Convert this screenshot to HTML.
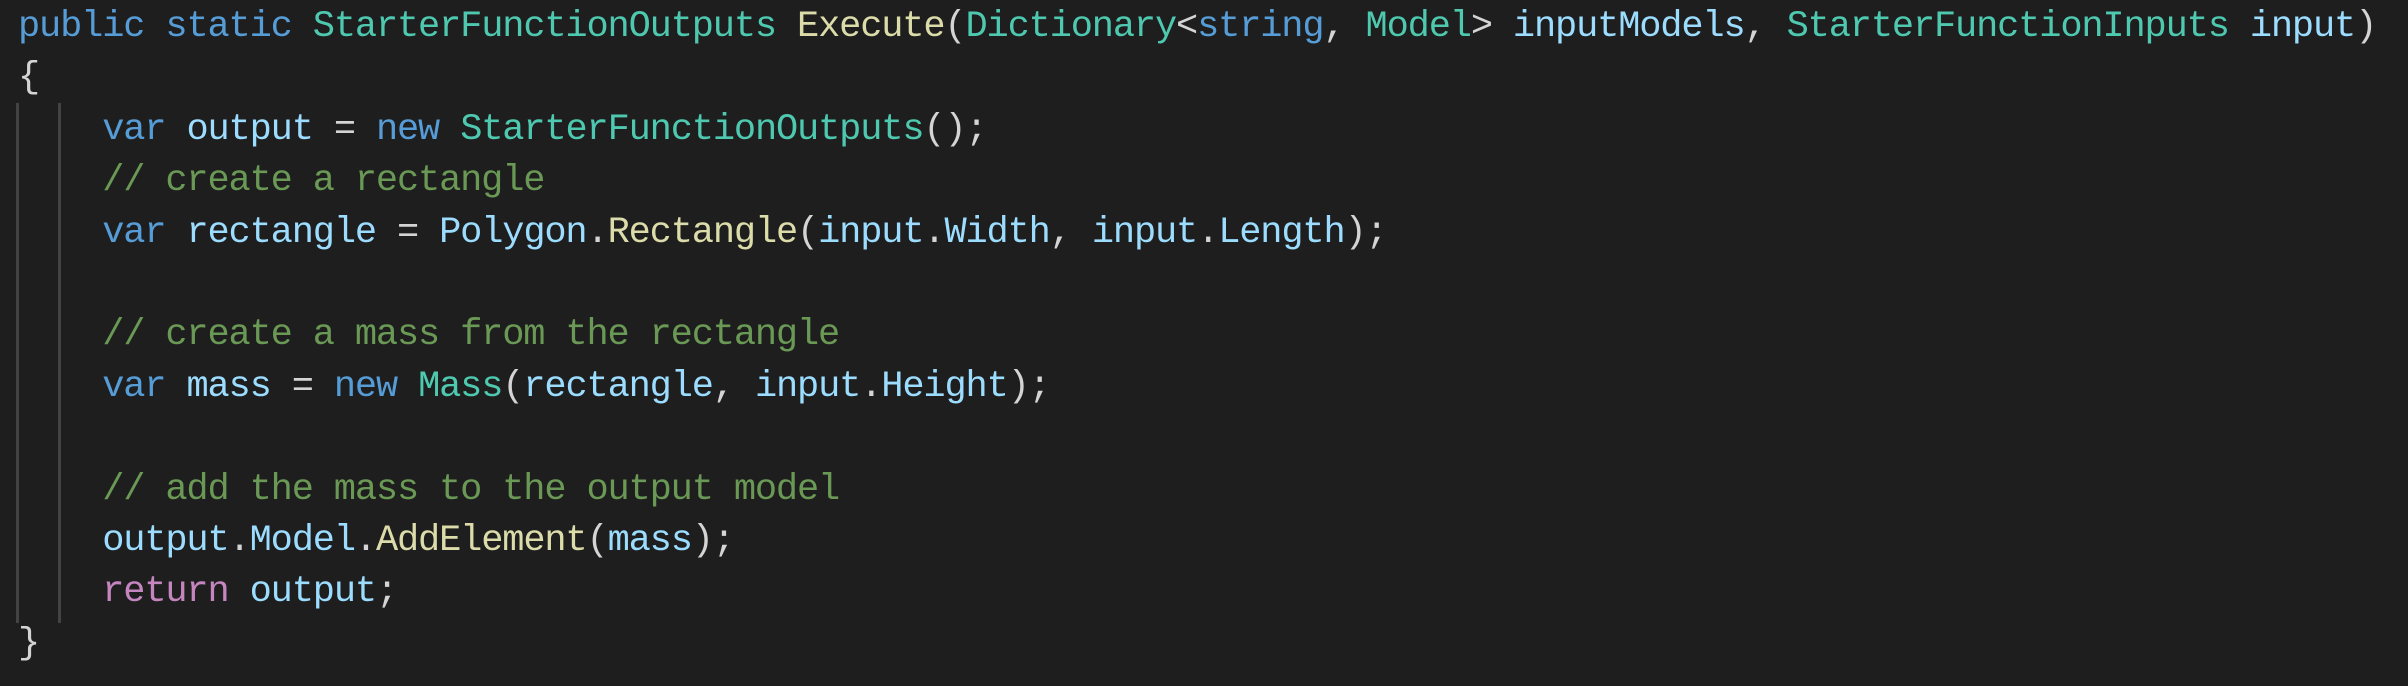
<!DOCTYPE html>
<html><head><meta charset="utf-8"><style>
html,body{margin:0;padding:0;background:#1e1e1e;width:2408px;height:686px;overflow:hidden}
.code{position:absolute;left:18px;top:2px;font-family:"Liberation Mono",monospace;font-size:37px;line-height:51.4px;color:#d4d4d4;white-space:pre;letter-spacing:-1.15px}
.k{color:#569cd6}.t{color:#4ec9b0}.v{color:#9cdcfe}.f{color:#dcdcaa}.c{color:#6a9955}.r{color:#c586c0}
.g{position:absolute;top:103px;height:520px;width:3px;background:#434343}
</style></head><body>
<div class="g" style="left:16px"></div>
<div class="g" style="left:58px"></div>
<div class="code"><span class="k">public</span> <span class="k">static</span> <span class="t">StarterFunctionOutputs</span> <span class="f">Execute</span>(<span class="t">Dictionary</span>&lt;<span class="k">string</span>, <span class="t">Model</span>&gt; <span class="v">inputModels</span>, <span class="t">StarterFunctionInputs</span> <span class="v">input</span>)
{
    <span class="k">var</span> <span class="v">output</span> = <span class="k">new</span> <span class="t">StarterFunctionOutputs</span>();
    <span class="c">// create a rectangle</span>
    <span class="k">var</span> <span class="v">rectangle</span> = <span class="v">Polygon</span>.<span class="f">Rectangle</span>(<span class="v">input</span>.<span class="v">Width</span>, <span class="v">input</span>.<span class="v">Length</span>);

    <span class="c">// create a mass from the rectangle</span>
    <span class="k">var</span> <span class="v">mass</span> = <span class="k">new</span> <span class="t">Mass</span>(<span class="v">rectangle</span>, <span class="v">input</span>.<span class="v">Height</span>);

    <span class="c">// add the mass to the output model</span>
    <span class="v">output</span>.<span class="v">Model</span>.<span class="f">AddElement</span>(<span class="v">mass</span>);
    <span class="r">return</span> <span class="v">output</span>;
}</div>
</body></html>
